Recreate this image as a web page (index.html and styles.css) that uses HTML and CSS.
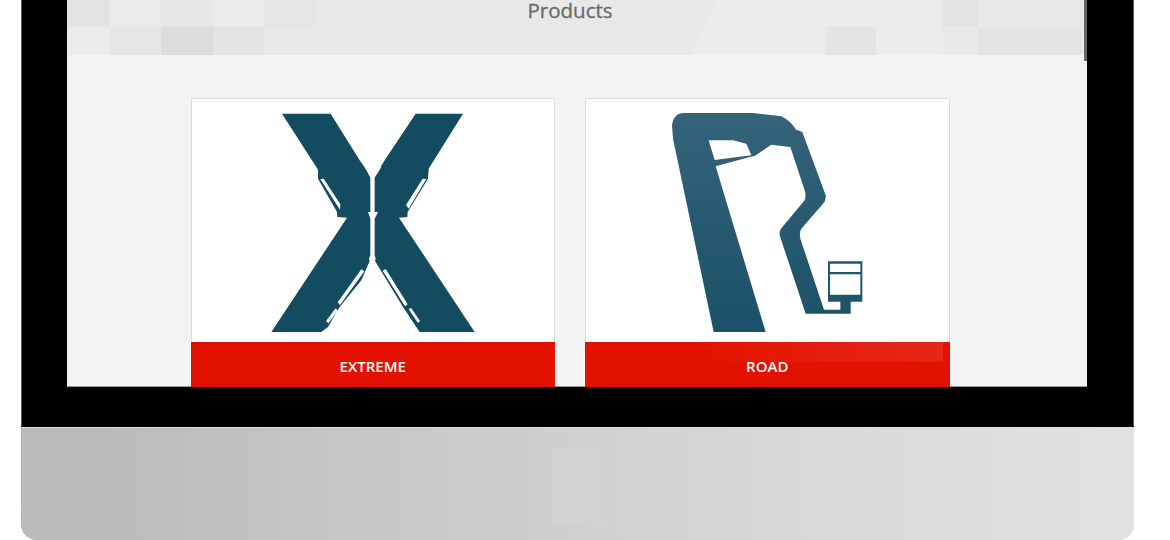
FILE: index.html
```html
<!DOCTYPE html>
<html>
<head>
    <title>Products</title>
    <meta name="viewport" content="width=device-width, initial-scale=1">
    <link rel="stylesheet" href="styles.css">
</head>
<body>
    <div class="device">
        <div class="bezel">
            <div class="screen">
                <div class="page-head">
                    <h1>Products</h1>
                </div>
                <div class="glare"></div>
                <div class="product-list">
                    <div class="product">
                        <div class="product-pic">
                            <svg class="logo-x" viewBox="65 38 610 657">
                                <path class="teal-dark" d="M97 40 L243 40 L330 180 L372 240 L372 478 L360 482 L335 540 L270 620 L235 680 L215 695 L65 695 L292 352 L263 350 L262 335 L205 235 L205 208 Z"/>
                                <path class="teal-dark" d="M498 40 L640 40 L537 205 L535 235 L474 335 L473 350 L448 352 L675 695 L510 695 L460 620 L376 482 L368 478 L368 240 L405 180 Z"/>
                                <path class="cut" d="M212 237 L222 235 L272 312 L271 328 Z"/>
                                <path class="cut" d="M519 235 L530 236 L477 325 L469 314 Z"/>
                                <path class="cut" d="M335 507 L344 513 L271 614 L264 606 Z"/>
                                <path class="cut" d="M258 624 L265 631 L236 669 L229 662 Z"/>
                                <path class="cut" d="M399 511 L408 506 L474 612 L466 618 Z"/>
                                <path class="cut" d="M477 627 L484 622 L511 662 L505 668 Z"/>
                                <path class="cut" d="M345 200 L395 200 L375 232 L375 335 L385 335 L375 355 L375 465 L378 475 L376 482 L360 482 L358 475 L362 465 L362 355 L355 335 L362 335 L362 232 Z"/>
                            </svg>
                        </div>
                        <div class="product-name">EXTREME</div>
                    </div>
                    <div class="product">
                        <div class="product-pic">
                            <svg class="logo-r" viewBox="67 38 573 657">
                                <defs>
                                    <linearGradient id="roadFill" x1="0" y1="0" x2="0" y2="1">
                                        <stop offset="0" stop-color="#34637a"/>
                                        <stop offset="1" stop-color="#1b5168"/>
                                    </linearGradient>
                                </defs>
                                <path fill="url(#roadFill)" fill-rule="evenodd" d="M67 75 Q70 40 100 38 L310 38 L395 48 Q420 60 440 88 L458 95 L528 285 Q530 300 520 310 L455 385 Q448 395 452 415 L523 628 L572 628 L572 604 L535 604 L535 483 L638 483 L638 604 L603 604 L603 640 L468 640 L390 405 Q388 390 400 378 L465 300 Q470 285 465 270 L422 140 L365 133 L315 167 L300 170 L198 198 L348 695 L192 695 L70 115 Z M177 120 L250 120 L290 130 L305 165 L195 179 Z M541 490 L632 490 L632 515 L541 515 Z M541 522 L632 522 L632 583 L541 583 Z"/>
                            </svg>
                        </div>
                        <div class="product-name road">ROAD</div>
                    </div>
                </div>
                <div class="scroll-thumb"></div>
            </div>
        </div>
        <div class="base"></div>
    </div>
</body>
</html>
```

FILE: styles.css
```css
html, body { margin: 0; padding: 0; background: #fff; }
body { width: 1170px; height: 540px; overflow: hidden; }

.device { margin-left: 21px; width: 1113px; height: 540px; }
.bezel {
    box-sizing: border-box;
    height: 427px;
    padding: 0 47px 0 46px;
    background: #000;
    border-bottom: 1px solid #000;
    box-shadow: inset 1px 0 0 #555, inset -1px 0 0 #555;
}
.base {
    height: 113px;
    box-sizing: border-box;
    border-top: 1px solid #e2e2e2;
    border-radius: 0 0 16px 16px;
    background-color: #ccc;
    background-image:
        linear-gradient(#d2d2d2, #d2d2d2),
        linear-gradient(to right, #bababa 0, #bcbcbc 10%, #c4c4c3 25%, #c9c9c8 35%, #cfcfcf 49%, #d4d5d4 61%, #dadcdb 79%, #e0e2e0 100%);
    background-size: 55px 77px, 100% 100%;
    background-position: 530px 20px, 0 0;
    background-repeat: no-repeat;
}

.screen {
    position: relative;
    height: 387px;
    overflow: hidden;
    background: #f3f3f3;
    font-family: "Open Sans", Arial, sans-serif;
    box-shadow: inset 0 -1px 0 #999;
}
.page-head {
    height: 55px;
    background-color: #e8e8e8;
    /* pixel mosaic of the header picture */
    background-image:
        linear-gradient(#e3e3e3, #e3e3e3), linear-gradient(#eaeaea, #eaeaea), linear-gradient(#e6e6e6, #e6e6e6), linear-gradient(#eaeaea, #eaeaea), linear-gradient(#e5e5e5, #e5e5e5),
        linear-gradient(#ebebeb, #ebebeb), linear-gradient(#e5e5e5, #e5e5e5), linear-gradient(#dcdcdc, #dcdcdc), linear-gradient(#e3e3e3, #e3e3e3),
        linear-gradient(#e0e0e0, #e0e0e0), linear-gradient(#e9e9e9, #e9e9e9), linear-gradient(#e3e3e3, #e3e3e3), linear-gradient(#e8e8e8, #e8e8e8), linear-gradient(#e3e3e3, #e3e3e3);
    background-size:
        43px 27px, 51px 27px, 52px 27px, 51px 27px, 51px 27px,
        43px 28px, 51px 28px, 52px 28px, 51px 28px,
        51px 28px, 36px 28px, 103px 28px, 15px 27px, 35px 27px;
    background-position:
        0 0, 43px 0, 94px 0, 146px 0, 197px 0,
        0 27px, 43px 27px, 94px 27px, 146px 27px,
        758px 27px, 875px 27px, 911px 27px, 861px 0, 876px 0;
    background-repeat: no-repeat;
}
.page-head h1 {
    margin: 0;
    padding-right: 14px;
    text-align: center;
    font-size: 20.5px;
    font-weight: 400;
    line-height: 21px;
    color: #6a6a6a;
    -webkit-text-stroke: 0.3px #6a6a6a;
}

.product-list { position: relative; z-index: 1; display: flex; gap: 30px; padding: 43px 0 0 123.5px; }
.product { box-sizing: border-box; width: 364.5px; background: #fff; box-shadow: inset 0 0 0 1px #dcdcdc; }
.product-pic { display: flex; justify-content: center; height: 229px; padding-top: 15px; }
.logo-x { width: 204px; height: 219px; }
.logo-r { width: 191px; height: 219px; }
.teal-dark { fill: #134c60; }
.cut { fill: #fff; }
.product-name {
    height: 48px;
    background: #e31200;
    color: #fff;
    text-align: center;
    font-size: 15px;
    font-weight: 600;
    line-height: 48px;
}
.product-name.road {
    background-image: linear-gradient(to right, rgba(255,255,255,0), rgba(255,255,255,.09));
    background-size: 251px 20px;
    background-position: 107px 0;
    background-repeat: no-repeat;
}

.glare {
    position: absolute;
    top: 0;
    left: 602px;
    width: 273px;
    height: 98px;
    clip-path: polygon(49px 0, 273px 0, 273px 98px, 0 98px);
    background: rgba(255,255,255,.14);
    pointer-events: none;
}
.scroll-thumb {
    position: absolute;
    top: 0;
    right: 0;
    z-index: 2;
    width: 3px;
    height: 61px;
    background: #666;
}
```
